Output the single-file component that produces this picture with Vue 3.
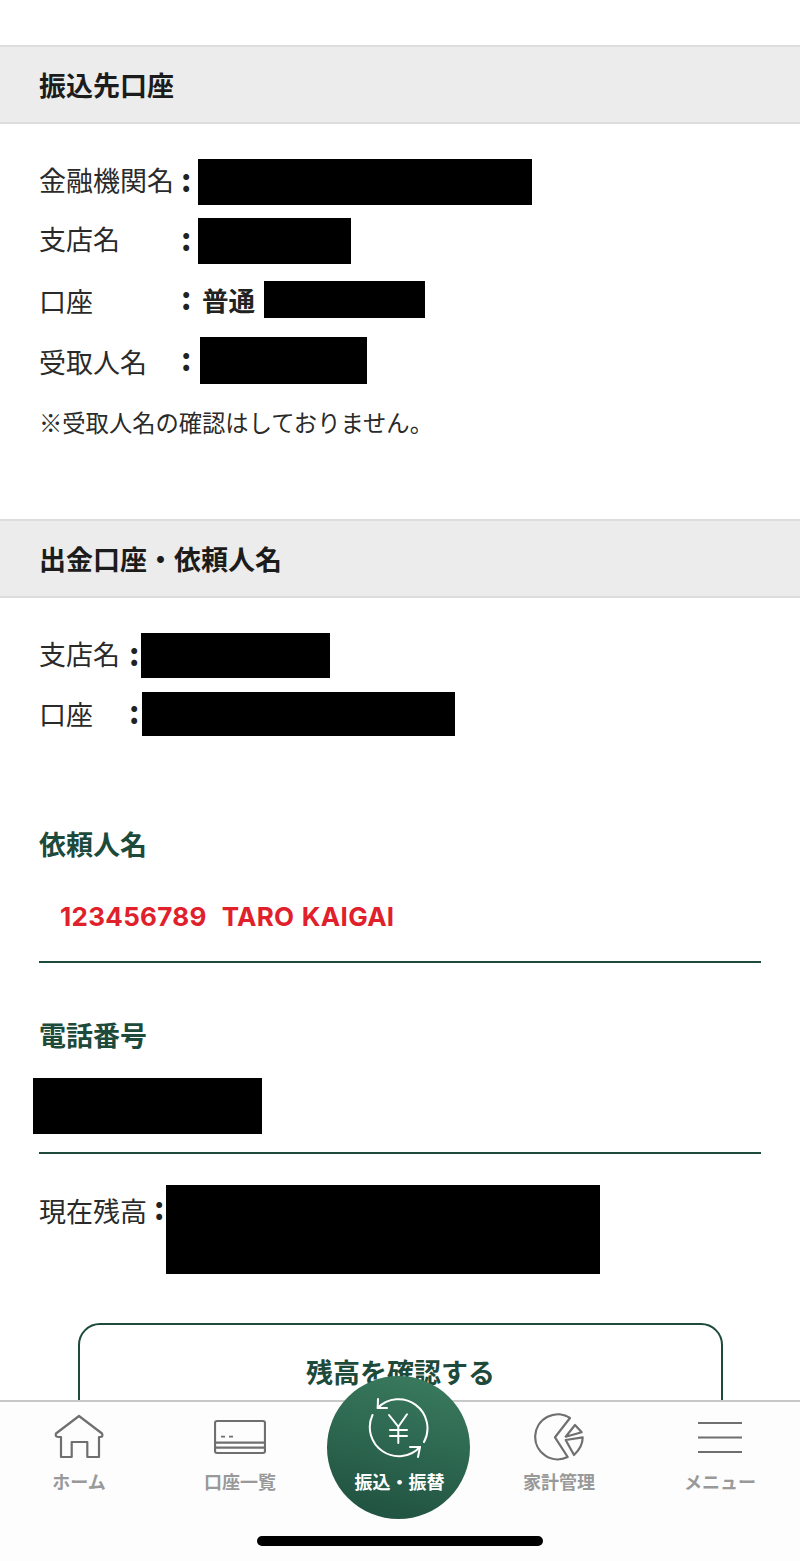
<script setup>
const payeeRows = [
  { label: '金融機関名', width: 334, height: 46, gap: 13, up: 4 },
  { label: '支店名', width: 153, height: 46, gap: 17, up: 4 },
  { label: '口座', width: 161, height: 37, gap: 19, type: '普通', down: 2 },
  { label: '受取人名', width: 167, height: 47, gap: 0, left: 2, down: 2 },
]

const tabs = [
  { key: 'home', label: 'ホーム' },
  { key: 'list', label: '口座一覧' },
  { key: 'transfer', label: '振込・振替', main: true },
  { key: 'budget', label: '家計管理' },
  { key: 'menu', label: 'メニュー' },
]
</script>

<template>
  <div class="page">
    <section class="section section-first">
      <h2 class="section-title">振込先口座</h2>
      <div class="rows payee-rows">
        <div v-for="r in payeeRows" :key="r.label" class="row" :style="{ marginBottom: r.gap + 'px' }">
          <span class="row-label payee-label" :style="{ paddingBottom: (r.up || 0) + 'px', paddingTop: (r.down || 0) + 'px' }">{{ r.label }}</span>
          <span class="colon payee-colon">:</span>
          <strong v-if="r.type" class="acct-type">{{ r.type }}</strong>
          <span class="redact" :style="{ width: r.width + 'px', height: r.height + 'px', marginLeft: (r.left || 0) + 'px' }"></span>
        </div>
      </div>
      <p class="note">※受取人名の確認はしておりません。</p>
    </section>

    <section class="section section-second">
      <h2 class="section-title">出金口座・依頼人名</h2>
      <div class="rows sender-rows">
        <div class="row row-branch">
          <span class="row-label sender-label branch-label">支店名</span>
          <span class="colon sender-colon">:</span>
          <span class="redact redact-branch"></span>
        </div>
        <div class="row">
          <span class="row-label sender-label">口座</span>
          <span class="colon sender-colon">:</span>
          <span class="redact redact-acct"></span>
        </div>
      </div>

      <div class="field field-name">
        <div class="field-label">依頼人名</div>
        <div class="field-value">123456789&nbsp; TARO KAIGAI</div>
      </div>
      <div class="field field-tel">
        <div class="field-label">電話番号</div>
        <div class="tel-box"><span class="redact redact-tel"></span></div>
      </div>

      <div class="balance">
        <span class="balance-label">現在残高</span>
        <span class="colon balance-colon">:</span>
        <span class="redact redact-balance"></span>
      </div>

      <button class="check-btn">残高を確認する</button>
    </section>

    <nav class="tabbar">
      <div v-for="t in tabs" :key="t.key" class="tab" :class="{ 'tab-main': t.main }">
        <div class="icon-box">
          <svg v-if="t.key === 'home'" width="52" height="46" viewBox="0 0 52 46" fill="none" stroke="#6f6f6f" stroke-width="2.2" stroke-linejoin="round">
            <path d="M26 2 L49 19.5 Q50.5 23 47 23 L46 23 V43 H34.3 V28 H18.7 V43 H8 V23 H6 Q1.5 23 3 19.5 Z" />
          </svg>
          <svg v-else-if="t.key === 'list'" width="52" height="36" viewBox="0 0 52 36" fill="none" stroke="#6f6f6f" stroke-width="2.2">
            <rect x="1" y="2" width="50" height="32" rx="2" />
            <path d="M1 23.7 H51 M1 28.7 H51" />
            <path d="M7 17.7 H11 M15 17.7 H19" stroke-width="1.8" />
          </svg>
          <svg v-else-if="t.key === 'budget'" width="50" height="48" viewBox="0 0 50 48" fill="none" stroke="#6f6f6f" stroke-width="2.2" stroke-linejoin="round">
            <path d="M36 5 A22.5 22.5 0 1 0 33.7 44 L21 24.3 Z" />
            <path d="M41 12 L47.7 19.3 L31.7 23.7 Z" />
            <path d="M31.7 27 L48.7 24.3 Q48.7 34 40 42 Z" />
          </svg>
          <svg v-else-if="t.key === 'menu'" width="46" height="33" viewBox="0 0 46 33" fill="none" stroke="#6f6f6f" stroke-width="2.2">
            <path d="M1 2 H45 M1 16.5 H45 M1 31 H45" />
          </svg>
        </div>
        <svg v-if="t.main" class="main-icon" width="62" height="62" viewBox="0 0 62 62" fill="none" stroke="#fff" stroke-width="2" stroke-linecap="round" stroke-linejoin="round">
          <path d="M9.7 11 A29 29 0 0 1 56 45" />
          <path d="M10 2 L9.7 11 L19 11" />
          <path d="M52 50 A29 29 0 0 1 4.5 18" />
          <path d="M42 50 L52 50 L50 60" />
          <path d="M21 18 L30.3 29.7 L39 17.3 M30.3 29.7 V46 M22 33 H39 M22 39 H39" />
        </svg>
        <span class="tab-label">{{ t.label }}</span>
      </div>
      <div class="home-indicator"></div>
    </nav>
  </div>
</template>

<style scoped>
.page {
  position: relative;
  width: 800px;
  height: 1561px;
  overflow: hidden;
  background: #fff;
  color: #222;
  font-family: "Noto Sans CJK JP", "Noto Sans", sans-serif;
  padding-top: 45px;
  box-sizing: border-box;
}

.section-title {
  margin: 0;
  height: 75px;
  line-height: 76px;
  padding-left: 39px;
  background: #ececec;
  border-top: 2px solid #dddddd;
  border-bottom: 2px solid #dddddd;
  font-size: 27px;
  font-weight: 700;
  color: #1c1c1c;
}

.rows {
  padding-left: 39px;
}

.payee-rows {
  padding-top: 35px;
}

.row {
  display: flex;
  align-items: center;
  font-size: 27px;
}

.row-label {
  line-height: 32px;
  color: #2a2a2a;
}

.payee-label {
  width: 142px;
}

.sender-label {
  width: 90px;
}

.branch-label {
  padding-bottom: 4px;
}

.colon {
  font-size: 32px;
  font-weight: 700;
  line-height: 1;
  margin-top: -8px;
}

.payee-colon {
  width: 17px;
}

.sender-colon {
  width: 12px;
}

.acct-type {
  margin-left: 4px;
  margin-right: 9px;
  font-size: 26.5px;
  line-height: 32px;
  font-weight: 700;
}

.redact {
  display: block;
  background: #000;
  flex: none;
}

.note {
  margin: 20px 0 0 39px;
  font-size: 23.3px;
  line-height: 36px;
  color: #2a2a2a;
}

.section-second {
  margin-top: 79px;
}

.sender-rows {
  padding-top: 35px;
}

.row-branch {
  margin-bottom: 14px;
}

.redact-branch {
  width: 189px;
  height: 45px;
}

.redact-acct {
  width: 313px;
  height: 44px;
  margin-left: 1px;
}

.field {
  margin: 0 39px;
  border-bottom: 2px solid #1d4a3a;
}

.field-name {
  margin-top: 89px;
  height: 136px;
}

.field-tel {
  height: 189px;
}

.field-label {
  font-size: 27px;
  line-height: 38px;
  font-weight: 700;
  color: #1d4a3a;
}

.field-tel .field-label {
  padding-top: 53px;
}

.field-value {
  margin-top: 37px;
  padding-left: 21px;
  font-family: "Inter", sans-serif;
  font-size: 26px;
  letter-spacing: 0.3px;
  word-spacing: 1px;
  line-height: 34px;
  font-weight: 700;
  color: #e0202b;
}

.tel-box {
  margin-top: 24px;
  margin-left: -6px;
}

.redact-tel {
  width: 229px;
  height: 56px;
}

.balance {
  display: flex;
  align-items: flex-start;
  margin: 31px 0 0 39px;
  font-size: 27px;
}

.balance-label {
  width: 115px;
  line-height: 52px;
  color: #2a2a2a;
}

.balance-colon {
  margin-top: 5px;
  width: 12px;
}

.redact-balance {
  width: 434px;
  height: 89px;
}

.check-btn {
  display: block;
  width: 645px;
  height: 110px;
  margin: 49px 0 0 78px;
  padding: 0 0 14px;
  background: #fff;
  border: 2px solid #1d4a3a;
  border-radius: 22px;
  font-family: inherit;
  font-size: 27px;
  font-weight: 700;
  color: #1d4a3a;
}

.tabbar {
  position: absolute;
  left: 0;
  right: 0;
  top: 1400px;
  height: 161px;
  display: grid;
  grid-template-columns: 158px 164px 155px 164px 158px;
  background: #fdfdfd;
  border-top: 2px solid #c8c8c8;
  box-sizing: border-box;
}

.tab {
  display: flex;
  flex-direction: column;
  align-items: center;
  padding-top: 13px;
}

.icon-box {
  height: 44px;
  display: flex;
  align-items: center;
  justify-content: center;
}

.tab-label {
  margin-top: 10px;
  font-size: 18px;
  line-height: 24px;
  font-weight: 700;
  color: #999;
  white-space: nowrap;
}

.tab-main {
  position: relative;
}

.tab-main::before {
  content: "";
  position: absolute;
  left: 5px;
  top: -26px;
  width: 143px;
  height: 143px;
  border-radius: 50%;
  background: linear-gradient(195deg, #3b7d60, #1e4f3e);
}

.main-icon {
  position: absolute;
  left: 46px;
  top: -5px;
}

.tab-main .tab-label {
  position: absolute;
  left: 0;
  right: 0;
  top: 67px;
  margin: 0;
  text-align: center;
  color: #fff;
}

.home-indicator {
  position: absolute;
  left: 257px;
  top: 134px;
  width: 286px;
  height: 10px;
  border-radius: 5px;
  background: #000;
}
</style>
